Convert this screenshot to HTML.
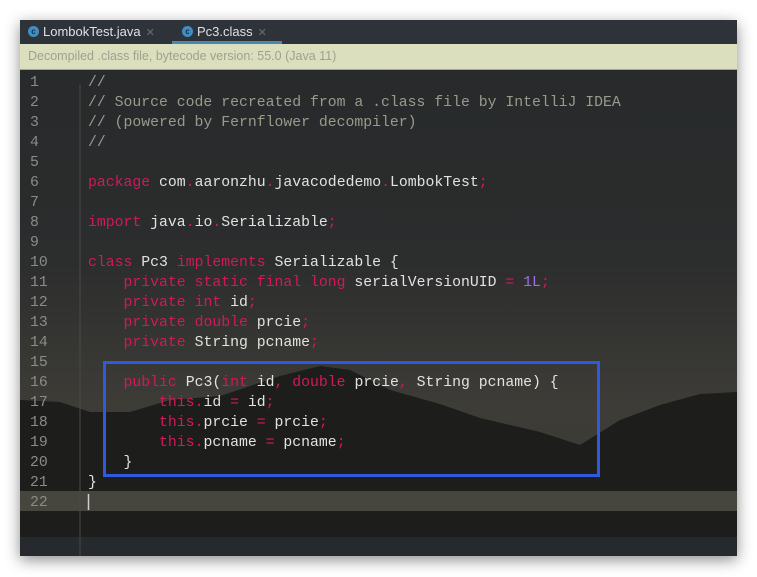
<!DOCTYPE html>
<html><head><style>
body{margin:0;width:757px;height:577px;background:#fff;position:relative;overflow:hidden;font-family:"Liberation Sans",sans-serif}
.win{position:absolute;left:20px;top:20px;width:717px;height:536px;background:#26292b;box-shadow:0 4px 14px rgba(0,0,0,.45);overflow:hidden}
.tabs{position:absolute;left:0;top:0;width:717px;height:24px;background:#2e333a}
.tab{position:absolute;top:0;height:24px;line-height:24px;color:#dfe1e5;font-size:13px}
.ic{display:inline-block;width:11px;height:11px;border-radius:50%;background:#3d8fc7;color:#1d2a35;font-size:8px;line-height:11px;text-align:center;vertical-align:middle;margin-right:4px;font-weight:bold;position:relative;top:-1px}
.x{color:#6a6f75;margin-left:5px;font-size:11px}
.banner{position:absolute;left:0;top:24px;width:717px;height:26px;background:#dcdfbd;border-bottom:1px solid #a6a884;color:#9fa190;font-size:12.5px;line-height:25px;padding-left:8px;box-sizing:border-box}
.code{position:absolute;left:0;top:53px;width:717px;font-family:"Liberation Mono",monospace;font-size:14.8px;line-height:20px;color:#e2e2e0}
.ln{position:absolute;left:10px;width:30px;color:#8b8b88;line-height:20px}
.t{position:absolute;left:68px;white-space:pre;line-height:20px}
.k{color:#cf1a5c}.c{color:#9a9a8c}.n{color:#9a6fe8}
</style></head><body>
<div class="win">
<svg style="position:absolute;left:0;top:0" width="717" height="536">
<defs><linearGradient id="g" x1="0" y1="0" x2="0" y2="1">
<stop offset="0" stop-color="#26292b"/><stop offset="0.45" stop-color="#2c2d2d"/><stop offset="0.72" stop-color="#3d3c37"/><stop offset="1" stop-color="#3a3934"/></linearGradient></defs>
<rect width="717" height="536" fill="url(#g)"/>
<polygon fill="#1d1d1c" points="0,380 40,382 70,392 110,392 150,380 200,376 260,356 300,346 330,350 370,370 420,384 460,398 520,412 560,425 600,400 640,385 680,374 717,372 717,536 0,536"/>
<rect x="0" y="471" width="717" height="20" fill="#46463e"/>
<rect x="0" y="517" width="717" height="19" fill="#26292d"/>
<line x1="60" y1="65" x2="60" y2="536" stroke="#4a4a48" stroke-width="1"/>
<rect x="84.5" y="342.5" width="494" height="113" fill="none" stroke="#2f5ae0" stroke-width="3"/>
<line x1="68.5" y1="474" x2="68.5" y2="490" stroke="#cfcfcf" stroke-width="1.5"/>
</svg>
<div class="tabs">
<div class="tab" style="left:8px"><span class="ic">c</span>LombokTest.java<span class="x">✕</span></div>
<div class="tab" style="left:152px;width:110px;padding-left:10px;box-sizing:border-box;border-bottom:3px solid #4a88b0;height:24px"><span class="ic">c</span>Pc3.class<span class="x">✕</span></div>
</div>
<div class="banner">Decompiled .class file, bytecode version: 55.0 (Java 11)</div>
<div class="code">
<div class="ln" style="top:0">1</div><div class="t c" style="top:0">//</div>
<div class="ln" style="top:20px">2</div><div class="t c" style="top:20px">// Source code recreated from a .class file by IntelliJ IDEA</div>
<div class="ln" style="top:40px">3</div><div class="t c" style="top:40px">// (powered by Fernflower decompiler)</div>
<div class="ln" style="top:60px">4</div><div class="t c" style="top:60px">//</div>
<div class="ln" style="top:80px">5</div>
<div class="ln" style="top:100px">6</div><div class="t" style="top:100px"><span class="k">package</span> com<span class="k">.</span>aaronzhu<span class="k">.</span>javacodedemo<span class="k">.</span>LombokTest<span class="k">;</span></div>
<div class="ln" style="top:120px">7</div>
<div class="ln" style="top:140px">8</div><div class="t" style="top:140px"><span class="k">import</span> java<span class="k">.</span>io<span class="k">.</span>Serializable<span class="k">;</span></div>
<div class="ln" style="top:160px">9</div>
<div class="ln" style="top:180px">10</div><div class="t" style="top:180px"><span class="k">class</span> Pc3 <span class="k">implements</span> Serializable {</div>
<div class="ln" style="top:200px">11</div><div class="t" style="top:200px">    <span class="k">private static final long</span> serialVersionUID <span class="k">=</span> <span class="n">1L</span><span class="k">;</span></div>
<div class="ln" style="top:220px">12</div><div class="t" style="top:220px">    <span class="k">private int</span> id<span class="k">;</span></div>
<div class="ln" style="top:240px">13</div><div class="t" style="top:240px">    <span class="k">private double</span> prcie<span class="k">;</span></div>
<div class="ln" style="top:260px">14</div><div class="t" style="top:260px">    <span class="k">private</span> String pcname<span class="k">;</span></div>
<div class="ln" style="top:280px">15</div>
<div class="ln" style="top:300px">16</div><div class="t" style="top:300px">    <span class="k">public</span> Pc3(<span class="k">int</span> id<span class="k">,</span> <span class="k">double</span> prcie<span class="k">,</span> String pcname) {</div>
<div class="ln" style="top:320px">17</div><div class="t" style="top:320px">        <span class="k">this.</span>id <span class="k">=</span> id<span class="k">;</span></div>
<div class="ln" style="top:340px">18</div><div class="t" style="top:340px">        <span class="k">this.</span>prcie <span class="k">=</span> prcie<span class="k">;</span></div>
<div class="ln" style="top:360px">19</div><div class="t" style="top:360px">        <span class="k">this.</span>pcname <span class="k">=</span> pcname<span class="k">;</span></div>
<div class="ln" style="top:380px">20</div><div class="t" style="top:380px">    }</div>
<div class="ln" style="top:400px">21</div><div class="t" style="top:400px">}</div>
<div class="ln" style="top:420px">22</div>
</div>
</div>
</body></html>
